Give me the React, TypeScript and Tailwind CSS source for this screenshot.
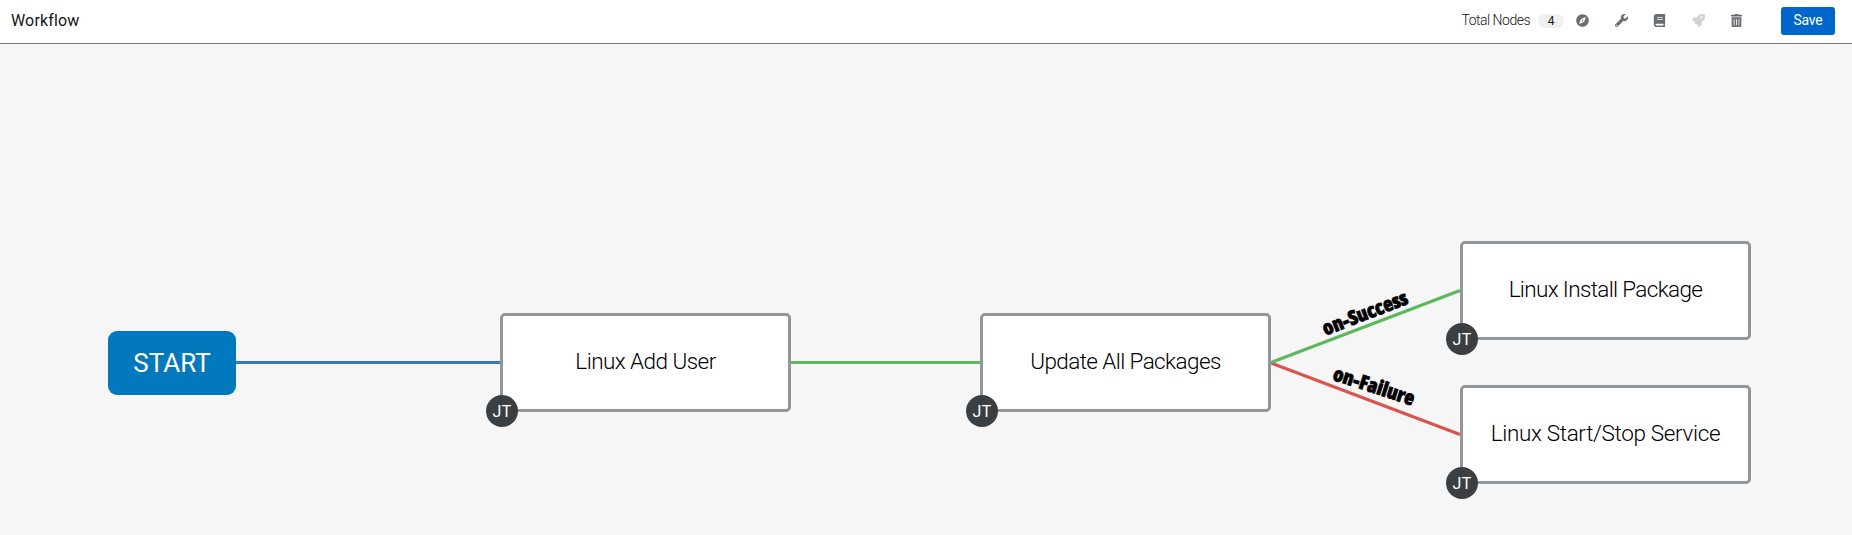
import React from "react";
import { FaBook, FaCompass, FaRocket, FaTrashAlt, FaWrench } from "react-icons/fa";

function Header() {
  return (
    <header className="flex h-[44px] items-center border-b border-[#77797c] bg-white pr-[17px] pl-[11px]">
      <h1 className="grow pb-[1px] text-[16px] leading-6 tracking-[0.15px] text-[#151515]">Workflow</h1>
      <div className="flex items-center pb-[2px]">
        <span className="pb-px text-[14px] leading-5 font-light tracking-[-0.5px] text-[#151515]">Total Nodes</span>
        <span className="ml-2 flex h-[14px] w-[26px] items-center justify-center rounded-full bg-[#f0f0f0] text-[12px] text-[#151515]">4</span>
        <div className="ml-[12px] flex items-center gap-[25.5px] text-[13px] text-[#6a6e73]">
          <FaCompass />
          <FaWrench />
          <FaBook />
          <FaRocket className="text-[#d2d2d2]" />
          <FaTrashAlt />
        </div>
        <button className="ml-[38px] h-[28px] w-[54px] rounded-[3px] bg-[#0066cc] text-[14px] tracking-[-0.2px] text-white">Save</button>
      </div>
    </header>
  );
}

function JobNode({ name, place, text }: { name: string; place: string; text: string }) {
  return (
    <div className={`absolute flex h-[99px] w-[291px] items-center justify-center rounded-[5px] border-3 border-[#93969a] bg-white pb-px ${place}`}>
      <span className={`text-[22.5px] font-light whitespace-nowrap text-black ${text}`}>{name}</span>
      <span className="absolute -bottom-[18px] -left-[17px] flex size-8 items-center justify-center rounded-full bg-[#3c3f42] pt-px text-[16px] tracking-[0.3px] text-white">JT</span>
    </div>
  );
}

function EdgeLabel({ name, place }: { name: string; place: string }) {
  return (
    <span className={`absolute flex h-6 w-[88px] items-center justify-center font-['Open_Sans',sans-serif] text-[20px] font-extrabold whitespace-nowrap text-black [-webkit-text-stroke:0.8px_black] [font-stretch:75%] ${place}`}>
      {name}
    </span>
  );
}

export default function App() {
  return (
    <div className="flex h-[535px] w-[1852px] flex-col overflow-hidden bg-[#f6f6f6] font-['Roboto',sans-serif]">
      <Header />
      <main className="relative grow">
        <svg className="absolute inset-0" width="1852" height="491" fill="none" strokeWidth="3">
          <path d="M236 318.5H500" stroke="#337ab7" />
          <path d="M790 318.5H981" stroke="#5cb85c" />
          <path d="M1271 319L1460 390.5" stroke="#d9534f" />
          <path d="M1271 318.5L1460 246.5" stroke="#5cb85c" />
        </svg>
        <div className="absolute top-[287px] left-[108px] flex h-[64px] w-[128px] items-center justify-center rounded-[9px] bg-[#0279bd] text-[26px] text-white">START</div>
        <JobNode name="Linux Add User" place="left-[500px] top-[269px]" text="tracking-[-0.55px]" />
        <JobNode name="Update All Packages" place="left-[980px] top-[269px]" text="tracking-[-0.6px]" />
        <JobNode name="Linux Install Package" place="left-[1460px] top-[197px]" text="tracking-[-0.65px]" />
        <JobNode name="Linux Start/Stop Service" place="left-[1460px] top-[341px]" text="tracking-[-0.35px]" />
        <EdgeLabel name="on-Success" place="top-[257px] left-[1321px] -rotate-[21deg]" />
        <EdgeLabel name="on-Failure" place="top-[330px] left-[1330px] rotate-[18deg]" />
      </main>
    </div>
  );
}
